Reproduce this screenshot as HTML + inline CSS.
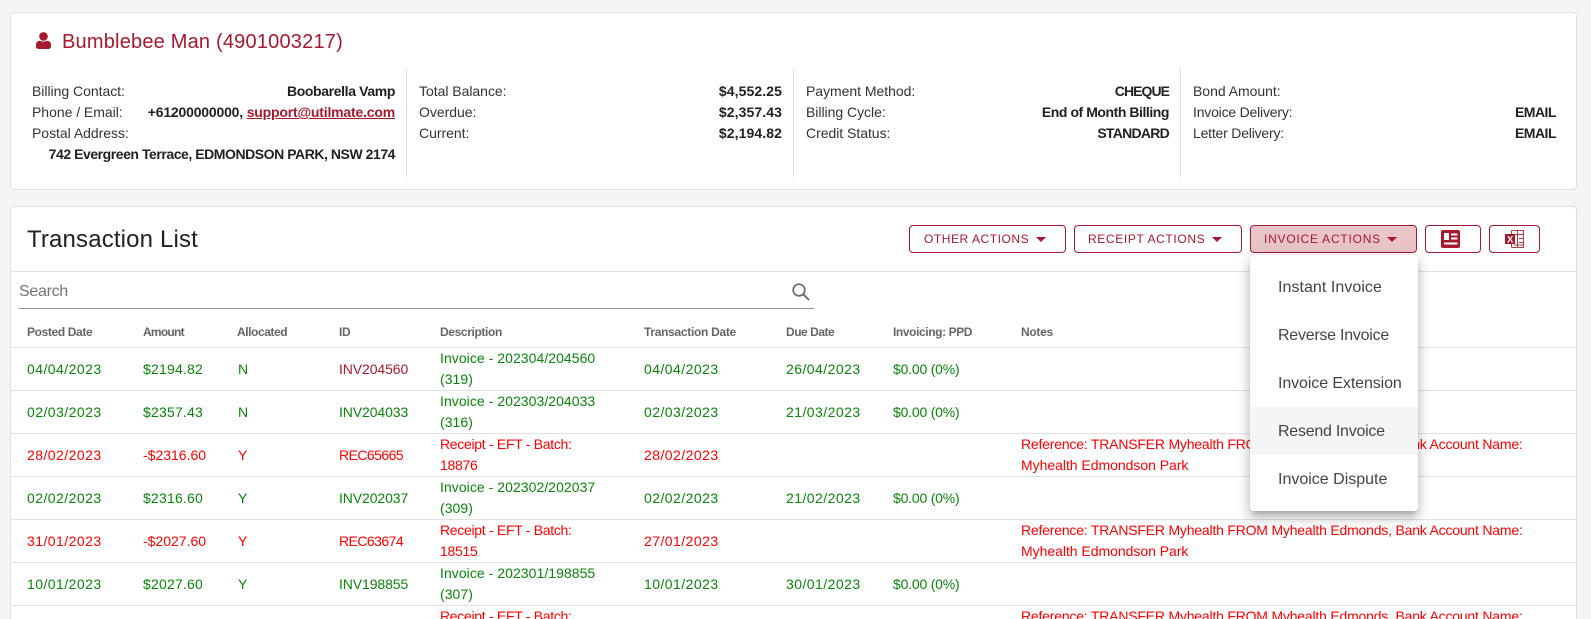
<!DOCTYPE html>
<html><head><meta charset="utf-8"><style>
*{box-sizing:border-box}
html,body{margin:0;padding:0;width:1591px;height:619px;overflow:hidden;background:#f5f5f5;font-family:"Liberation Sans",sans-serif;font-size:14px;color:#212121}
#w{position:relative;width:1591px;height:619px;overflow:hidden;background:#f5f5f5}
.a{position:absolute;white-space:nowrap}
.card{position:absolute;left:10px;width:1567px;background:#fff;border:1px solid #e0e0e0;border-radius:4px}
.l{position:absolute;white-space:nowrap;line-height:21px;letter-spacing:-.03px;color:#333}
.v{position:absolute;white-space:nowrap;line-height:21px;font-weight:bold;text-align:right;color:#212121}
.dv{position:absolute;top:69px;width:1px;height:108px;background:#e0e0e0}
.btn{position:absolute;top:225px;height:28px;border:1px solid #a6192e;border-radius:4px;background:#fff}
.bt{position:absolute;top:232px;line-height:14px;font-size:12px;color:#a6192e;white-space:nowrap}
.car{position:absolute;top:236.5px;width:0;height:0;border-left:5px solid transparent;border-right:5px solid transparent;border-top:5px solid #a6192e}
.th{position:absolute;top:325px;line-height:14px;font-size:12px;font-weight:bold;color:#666;white-space:nowrap;letter-spacing:-.37px}
.hr{position:absolute;left:11px;width:1565px;height:1px;background:#e0e0e0}
.g,.rd{position:absolute;white-space:nowrap;line-height:21px}
.g{color:#0a850a}.rd{color:#f00}
.dt{letter-spacing:.45px}.am{letter-spacing:.2px}.am2{letter-spacing:0}
.idi{letter-spacing:-.1px}.idr{letter-spacing:-.55px}
.inv{letter-spacing:.05px}.rc{letter-spacing:-.3px}.pp{letter-spacing:-.2px}
.nt{letter-spacing:-.2px}
.nt span{letter-spacing:-.03px}
.dd{position:absolute;left:1250px;top:255px;width:168px;height:256px;background:#fff;border-radius:4px;box-shadow:0 5px 5px -3px rgba(0,0,0,.2),0 8px 10px 1px rgba(0,0,0,.14),0 3px 14px 2px rgba(0,0,0,.12)}
.it{position:absolute;left:0;width:168px;height:48px;line-height:49px;padding-left:28px;font-size:16px;color:#444;white-space:nowrap}
</style></head><body><div id="w">

<div class="card" style="top:12px;height:178px"></div>
<svg class="a" style="left:36px;top:32px" width="15" height="17" viewBox="0 0 15 17"><circle cx="7.5" cy="4.4" r="4.3" fill="#a6192e"/><path d="M0 14.4V12.6C0 10.4 1.9 8.8 4 8.8c1 .5 2.2.8 3.5.8s2.500-.3 3.500-.8c2.100 0 4 1.600 4 3.800v1.800c0 1.400-1 2.600-2.400 2.600H2.400C1 17 0 15.800 0 14.400z" fill="#a6192e"/></svg>
<div class="a" style="left:62px;top:30px;line-height:24px;font-size:20px;color:#a6192e;letter-spacing:.2px">Bumblebee Man (4901003217)</div>

<div class="l" style="left:32px;top:81px">Billing Contact:</div>
<div class="l" style="left:32px;top:102px">Phone / Email:</div>
<div class="l" style="left:32px;top:123px">Postal Address:</div>
<div class="v" style="right:1196px;top:81px;letter-spacing:-.37px">Boobarella Vamp</div>
<div class="v" style="right:1196px;top:102px;letter-spacing:-.19px">+61200000000, <span style="color:#a6192e;text-decoration:underline">support@utilmate.com</span></div>
<div class="v" style="right:1196px;top:144px;letter-spacing:-.45px">742 Evergreen Terrace, EDMONDSON PARK, NSW 2174</div>
<div class="dv" style="left:406px"></div>

<div class="l" style="left:419px;top:81px">Total Balance:</div>
<div class="l" style="left:419px;top:102px">Overdue:</div>
<div class="l" style="left:419px;top:123px">Current:</div>
<div class="v" style="right:809px;top:81px;letter-spacing:.1px">$4,552.25</div>
<div class="v" style="right:809px;top:102px;letter-spacing:.1px">$2,357.43</div>
<div class="v" style="right:809px;top:123px;letter-spacing:.1px">$2,194.82</div>
<div class="dv" style="left:793px"></div>

<div class="l" style="left:806px;top:81px">Payment Method:</div>
<div class="l" style="left:806px;top:102px">Billing Cycle:</div>
<div class="l" style="left:806px;top:123px">Credit Status:</div>
<div class="v" style="right:422px;top:81px;letter-spacing:-.95px">CHEQUE</div>
<div class="v" style="right:422px;top:102px;letter-spacing:-.45px">End of Month Billing</div>
<div class="v" style="right:422px;top:123px;letter-spacing:-.73px">STANDARD</div>
<div class="dv" style="left:1180px"></div>

<div class="l" style="left:1193px;top:81px">Bond Amount:</div>
<div class="l" style="left:1193px;top:102px;letter-spacing:-.2px">Invoice Delivery:</div>
<div class="l" style="left:1193px;top:123px;letter-spacing:-.2px">Letter Delivery:</div>
<div class="v" style="right:35px;top:102px;letter-spacing:-.5px">EMAIL</div>
<div class="v" style="right:35px;top:123px;letter-spacing:-.5px">EMAIL</div>

<div class="card" style="top:206px;height:430px"></div>
<div class="a" style="left:27px;top:225px;line-height:29px;font-size:24px;color:#212121;letter-spacing:.15px">Transaction List</div>

<div class="btn" style="left:909px;width:157px"></div>
<div class="bt" style="left:924px;letter-spacing:.55px">OTHER ACTIONS</div><div class="car" style="left:1036px"></div>
<div class="btn" style="left:1074px;width:168px"></div>
<div class="bt" style="left:1088px;letter-spacing:.63px">RECEIPT ACTIONS</div><div class="car" style="left:1212px"></div>
<div class="btn" style="left:1250px;width:167px;background:#e9c5ca"></div>
<div class="bt" style="left:1264px;letter-spacing:.77px">INVOICE ACTIONS</div><div class="car" style="left:1387px"></div>
<div class="btn" style="left:1425px;width:56px"></div>
<svg class="a" style="left:1441px;top:230px" width="19" height="18" viewBox="0 0 19 18"><rect width="19" height="18" rx="2" fill="#a6192e"/><rect x="3" y="3" width="5" height="7" fill="#fff"/><rect x="10" y="3.500" width="6.500" height="2" fill="#fff"/><rect x="10" y="7.500" width="6.500" height="2" fill="#fff"/><rect x="3" y="12.500" width="13.500" height="2" fill="#fff"/></svg>
<div class="btn" style="left:1489px;width:51px"></div>
<svg class="a" style="left:1505px;top:230px" width="19" height="18" viewBox="0 0 19 18"><path d="M6.500.5h12v17h-12M6.500.5v4M6.500 14v3.500M12.500.5v17M9 4.500h9.500M14 8.500h4.500M14 12.500h4.500M9 15h9.500" fill="none" stroke="#a8424f" stroke-width="1.100"/><rect x="0" y="4" width="10" height="10" fill="#a6192e"/><text x="2" y="12.300" font-family="Liberation Sans" font-size="9.500" font-weight="bold" fill="#fff">X</text></svg>

<div class="hr" style="top:271px"></div>
<div class="a" style="left:19px;top:282px;line-height:20px;font-size:16px;color:#757575;letter-spacing:-.3px">Search</div>
<div class="a" style="left:19px;top:308px;width:795px;height:1px;background:#949494"></div>
<svg class="a" style="left:791px;top:282px" width="20" height="20" viewBox="0 0 20 20"><circle cx="8" cy="8" r="5.800" fill="none" stroke="#6b6b6b" stroke-width="1.700"/><path d="M12.200 12.200L18 18" stroke="#6b6b6b" stroke-width="1.900" fill="none"/></svg>

<div class="th" style="left:27px">Posted Date</div>
<div class="th" style="left:143px;letter-spacing:-.75px">Amount</div>
<div class="th" style="left:237px;letter-spacing:-.43px">Allocated</div>
<div class="th" style="left:339px">ID</div>
<div class="th" style="left:440px">Description</div>
<div class="th" style="left:644px;letter-spacing:-.3px">Transaction Date</div>
<div class="th" style="left:786px;letter-spacing:-.47px">Due Date</div>
<div class="th" style="left:893px;letter-spacing:-.4px">Invoicing: PPD</div>
<div class="th" style="left:1021px;letter-spacing:-.3px">Notes</div>
<div class="hr" style="top:347px"></div>

<div class="g dt" style="left:27px;top:359px">04/04/2023</div><div class="g am" style="left:143px;top:359px">$2194.82</div><div class="g" style="left:238px;top:359px">N</div><div class="g idi" style="left:339px;top:359px;color:#a6192e">INV204560</div><div class="g inv" style="left:440px;top:348px">Invoice - 202304/204560<br>(319)</div><div class="g dt" style="left:644px;top:359px">04/04/2023</div><div class="g dt" style="left:786px;top:359px">26/04/2023</div><div class="g pp" style="left:893px;top:359px">$0.00 (0%)</div>
<div class="hr" style="top:390px"></div>

<div class="g dt" style="left:27px;top:402px">02/03/2023</div><div class="g am" style="left:143px;top:402px">$2357.43</div><div class="g" style="left:238px;top:402px">N</div><div class="g idi" style="left:339px;top:402px">INV204033</div><div class="g inv" style="left:440px;top:391px">Invoice - 202303/204033<br>(316)</div><div class="g dt" style="left:644px;top:402px">02/03/2023</div><div class="g dt" style="left:786px;top:402px">21/03/2023</div><div class="g pp" style="left:893px;top:402px">$0.00 (0%)</div>
<div class="hr" style="top:433px"></div>

<div class="rd dt" style="left:27px;top:445px">28/02/2023</div><div class="rd am2" style="left:143px;top:445px">-$2316.60</div><div class="rd" style="left:238px;top:445px">Y</div><div class="rd idr" style="left:339px;top:445px">REC65665</div><div class="rd rc" style="left:440px;top:434px">Receipt - EFT - Batch:<br>18876</div><div class="rd dt" style="left:644px;top:445px">28/02/2023</div><div class="rd nt" style="left:1021px;top:434px">Reference: TRANSFER Myhealth FROM Myhealth Edmonds, Bank Account Name:<br><span>Myhealth Edmondson Park</span></div>
<div class="hr" style="top:476px"></div>

<div class="g dt" style="left:27px;top:488px">02/02/2023</div><div class="g am" style="left:143px;top:488px">$2316.60</div><div class="g" style="left:238px;top:488px">Y</div><div class="g idi" style="left:339px;top:488px">INV202037</div><div class="g inv" style="left:440px;top:477px">Invoice - 202302/202037<br>(309)</div><div class="g dt" style="left:644px;top:488px">02/02/2023</div><div class="g dt" style="left:786px;top:488px">21/02/2023</div><div class="g pp" style="left:893px;top:488px">$0.00 (0%)</div>
<div class="hr" style="top:519px"></div>

<div class="rd dt" style="left:27px;top:531px">31/01/2023</div><div class="rd am2" style="left:143px;top:531px">-$2027.60</div><div class="rd" style="left:238px;top:531px">Y</div><div class="rd idr" style="left:339px;top:531px">REC63674</div><div class="rd rc" style="left:440px;top:520px">Receipt - EFT - Batch:<br>18515</div><div class="rd dt" style="left:644px;top:531px">27/01/2023</div><div class="rd nt" style="left:1021px;top:520px">Reference: TRANSFER Myhealth FROM Myhealth Edmonds, Bank Account Name:<br><span>Myhealth Edmondson Park</span></div>
<div class="hr" style="top:562px"></div>

<div class="g dt" style="left:27px;top:574px">10/01/2023</div><div class="g am" style="left:143px;top:574px">$2027.60</div><div class="g" style="left:238px;top:574px">Y</div><div class="g idi" style="left:339px;top:574px">INV198855</div><div class="g inv" style="left:440px;top:563px">Invoice - 202301/198855<br>(307)</div><div class="g dt" style="left:644px;top:574px">10/01/2023</div><div class="g dt" style="left:786px;top:574px">30/01/2023</div><div class="g pp" style="left:893px;top:574px">$0.00 (0%)</div>
<div class="hr" style="top:605px"></div>

<div class="rd rc" style="left:440px;top:606px">Receipt - EFT - Batch:</div><div class="rd nt" style="left:1021px;top:606px">Reference: TRANSFER Myhealth FROM Myhealth Edmonds, Bank Account Name:</div>

<div class="dd">
<div class="it" style="top:8px;letter-spacing:.05px">Instant Invoice</div>
<div class="it" style="top:56px;letter-spacing:-.25px">Reverse Invoice</div>
<div class="it" style="top:104px;letter-spacing:-.1px">Invoice Extension</div>
<div class="it" style="top:152px;background:#f5f5f5;letter-spacing:-.25px">Resend Invoice</div>
<div class="it" style="top:200px;letter-spacing:0">Invoice Dispute</div>
</div>
</div></body></html>
